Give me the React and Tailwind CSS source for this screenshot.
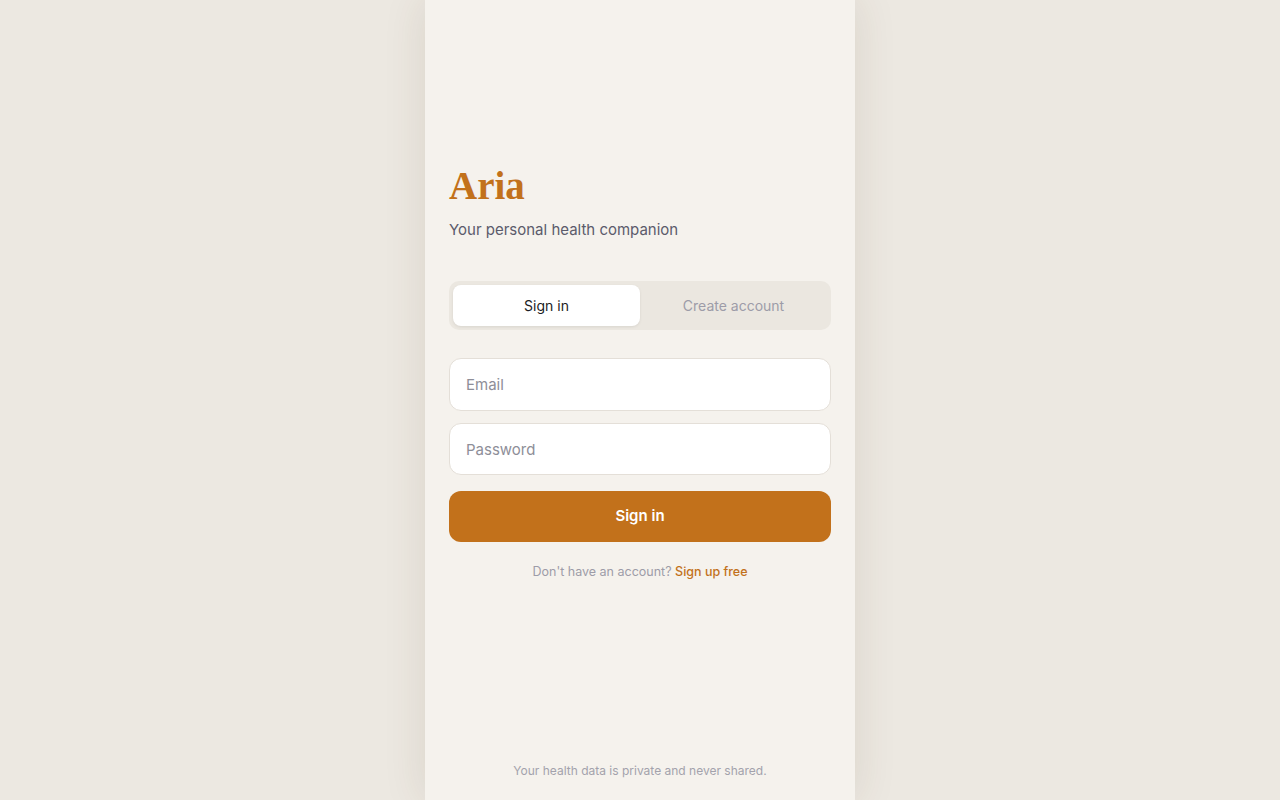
import { useState } from 'react'

export default function App() {
  const [tab, setTab] = useState('signin')

  return (
    <div className="min-h-screen w-full bg-[#ece8e1] flex justify-center" style={{ fontFamily: 'Inter, "Noto Sans", sans-serif' }}>
      <div className="w-[430px] min-h-screen bg-[#f5f2ed] flex flex-col shadow-[0_0_40px_rgba(80,60,30,0.12)]">
        {/* Main form */}
        <div className="flex-1 flex flex-col justify-center px-6 pb-[16px]">
          <h1 className="text-[39px] leading-[44px] font-bold text-[#c2711b]" style={{ fontFamily: '"Liberation Serif", "DejaVu Serif", serif' }}>
            Aria
          </h1>
          <p className="mt-[12px] text-[15px] leading-[20px] text-[#5b5b6b]">Your personal health companion</p>

          <div className="mt-[41px] h-[49px] rounded-[10px] bg-[#ebe7e0] p-1 flex">
            <button
              onClick={() => setTab('signin')}
              className={`flex-1 rounded-[8px] text-[14px] ${tab === 'signin' ? 'bg-white text-[#1c1c24] shadow-[0_1px_3px_rgba(0,0,0,0.08)]' : 'text-[#9d9ca8]'}`}
            >
              Sign in
            </button>
            <button
              onClick={() => setTab('create')}
              className={`flex-1 rounded-[8px] text-[14px] ${tab === 'create' ? 'bg-white text-[#1c1c24] shadow-[0_1px_3px_rgba(0,0,0,0.08)]' : 'text-[#9d9ca8]'}`}
            >
              Create account
            </button>
          </div>

          <input
            type="email"
            placeholder="Email"
            className="mt-[28px] h-[53px] w-full rounded-[12px] border border-[#e4dfd8] bg-white px-4 text-[15px] text-[#1c1c24] placeholder:text-[#8e8e98] outline-none"
          />
          <input
            type="password"
            placeholder="Password"
            className="mt-[12px] h-[52px] w-full rounded-[12px] border border-[#e4dfd8] bg-white px-4 text-[15px] text-[#1c1c24] placeholder:text-[#8e8e98] outline-none"
          />
          <button className="mt-[16px] h-[51px] w-full rounded-[12px] bg-[#c2711b] text-white text-[15px] font-semibold">
            {tab === 'signin' ? 'Sign in' : 'Create account'}
          </button>

          <p className="mt-[21px] text-center text-[12.5px] text-[#9d9ca8]">
            Don't have an account?{' '}
            <a href="#" className="font-medium text-[#c2711b]">Sign up free</a>
          </p>
        </div>

        {/* Footer */}
        <p className="pb-[20px] text-center text-[12px] text-[#a3a2ac]">Your health data is private and never shared.</p>
      </div>
    </div>
  )
}
